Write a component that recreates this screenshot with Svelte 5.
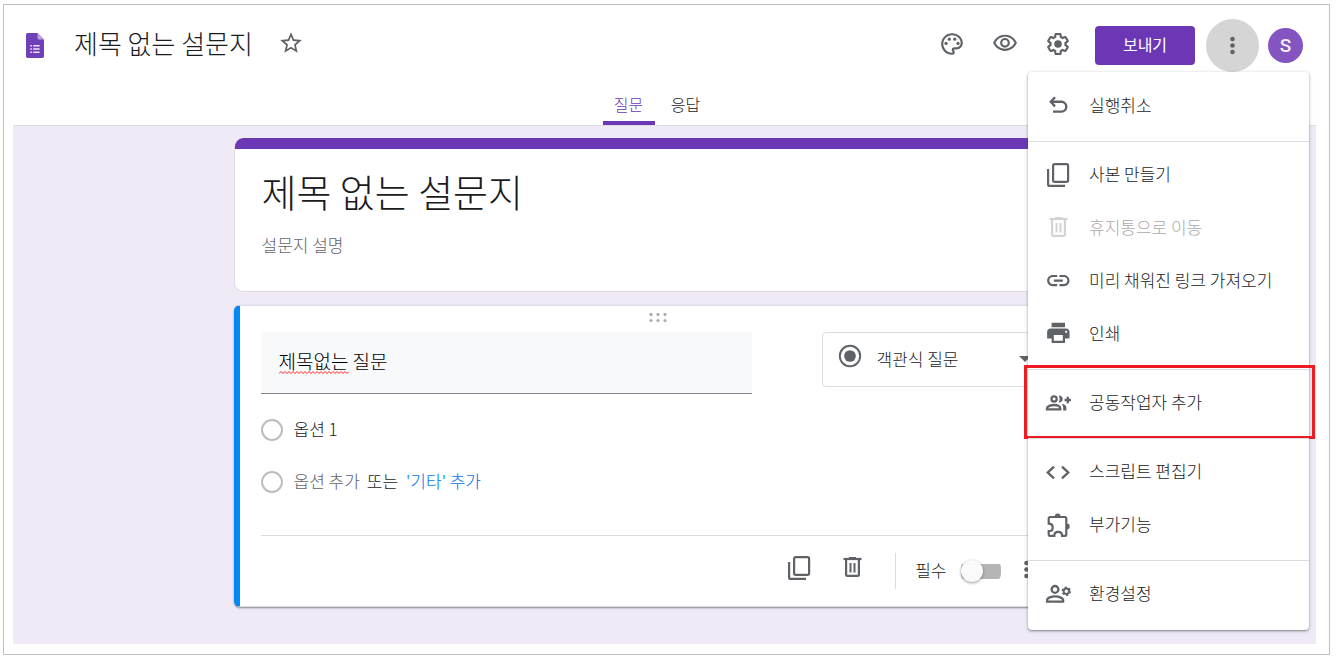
<script>
  let formTitle = $state('제목 없는 설문지');
  let description = $state('설문지 설명');
  let question = $state('제목없는 질문');
  let optionOne = $state('옵션 1');
  let required = $state(false);

  const sections = [
    { items: [{ icon: 'undo', label: '실행취소' }] },
    {
      items: [
        { icon: 'copy', label: '사본 만들기' },
        { icon: 'trash', label: '휴지통으로 이동', disabled: true },
        { icon: 'link', label: '미리 채워진 링크 가져오기' },
        { icon: 'print', label: '인쇄' }
      ]
    },
    { marked: true, items: [{ icon: 'people', label: '공동작업자 추가' }] },
    {
      items: [
        { icon: 'code', label: '스크립트 편집기' },
        { icon: 'addon', label: '부가기능' }
      ]
    },
    { items: [{ icon: 'prefs', label: '환경설정' }] }
  ];
</script>

{#snippet icon(name)}
  <svg class="icon" viewBox="0 0 26 26" aria-hidden="true">
    {#if name === 'undo'}
      <g fill="none" stroke="currentColor" stroke-width="2.4">
        <path d="M10 4.200 5.800 8.800l4.200 4.600" />
        <path d="M6 8.800h10.400a4.900 4.900 0 0 1 0 9.800H8" />
      </g>
    {:else if name === 'copy'}
      <g fill="none" stroke="currentColor" stroke-width="2.2">
        <rect x="8.1" y="2.1" width="15" height="17.8" rx="1.6" />
        <path d="M3.1 7v15.4q0 1.500 1.500 1.500H20" />
      </g>
    {:else if name === 'trash'}
      <g fill="none" stroke="currentColor" stroke-width="2.2">
        <path d="M7.100 4.500v15q0 1.400 1.400 1.400h10q1.400 0 1.400-1.400v-15" />
        <path d="M4.500 4h18" />
        <path d="M10 2.800h7" stroke-width="1.600" />
        <path d="M11.500 8v9.500M15.500 8v9.500" stroke-width="2" />
      </g>
    {:else if name === 'link'}
      <path transform="scale(1.12) translate(-.1 -.8)" d="M3.9 12c0-1.71 1.39-3.1 3.1-3.1h4V7H7c-2.76 0-5 2.24-5 5s2.24 5 5 5h4v-1.9H7c-1.71 0-3.1-1.39-3.1-3.1zM8 13h8v-2H8v2zm9-6h-4v1.9h4c1.71 0 3.1 1.39 3.1 3.1s-1.39 3.1-3.1 3.1h-4V17h4c2.76 0 5-2.24 5-5s-2.24-5-5-5z" />
    {:else if name === 'print'}
      <path transform="scale(1.12) translate(-.1 -1.400)" d="M19 8H5c-1.66 0-3 1.34-3 3v6h4v4h12v-4h4v-6c0-1.66-1.34-3-3-3zm-3 11H8v-5h8v5zm3-7c-.55 0-1-.45-1-1s.45-1 1-1 1 .45 1 1-.45 1-1 1zm-1-9H6v4h12V3z" />
    {:else if name === 'people'}
      <g fill="none" stroke="currentColor" stroke-width="2.3">
        <circle cx="9.1" cy="9" r="2.6" />
        <path d="M2 19.4v-1.2c0-2 4-3.2 7-3.2s6.300 1.200 6.300 3.200v1.200z" />
        <path d="M19.600 10h6.400M22.800 6.800v6.400" stroke-width="2.300" />
      </g>
      <path d="M13.700 5.500c2.200-.2 4 1.200 4 3.500s-1.800 3.700-4 3.500c1.300-2.200 1.300-4.800 0-7zM16.300 13.800c3 .4 5.100 1.800 5.100 4.200v2.400h-3.200V18c0-1.800-.7-3.100-1.900-4.200z" />
    {:else if name === 'code'}
      <path d="m9 7.600-6.200 5.900L9 19.400M17 7.600l6.200 5.900-6.200 5.900" fill="none" stroke="currentColor" stroke-width="2.400" />
    {:else if name === 'addon'}
      <path d="M5.100 5h14.800q1.400 0 1.400 1.400v16q0 1.400-1.400 1.400h-2.800c0-2.400-1.700-3.900-3.900-3.900s-3.900 1.500-3.900 3.900H5.100q-1.400 0-1.400-1.400v-3.200c2.500 0 4-1.700 4-3.800s-1.500-3.800-4-3.800V6.400Q3.700 5 5.100 5z" fill="none" stroke="currentColor" stroke-width="2.200" />
      <path d="M9.800 4.500a2.900 2.900 0 0 1 5.800 0zM21.800 11.500a2.900 2.900 0 0 1 0 5.800z" />
    {:else if name === 'prefs'}
      <g fill="none" stroke="currentColor" stroke-width="2.300">
        <circle cx="10" cy="8.400" r="3.400" />
        <path d="M2.100 20.600v-1.500c0-2.400 4.600-3.700 8-3.700s8 1.300 8 3.700v1.500z" />
        <circle cx="21.300" cy="10.300" r="2.700" stroke-width="2" />
        <circle cx="21.300" cy="10.300" r="4" stroke-width="1.400" stroke-dasharray="2.100 2.090" />
      </g>
    {/if}
  </svg>
{/snippet}

{#snippet dots()}
  <svg class="icon" viewBox="0 0 26 26" aria-hidden="true">
    <circle cx="12.500" cy="6" r="2.300" /><circle cx="12.500" cy="12.500" r="2.300" /><circle cx="12.500" cy="19" r="2.300" />
  </svg>
{/snippet}

<div class="frame">
  <header>
    <div class="topbar">
      <svg class="logo" viewBox="0 0 18 25" aria-hidden="true">
        <path d="M1.700 0H11.500L18 6.600V23.300Q18 25 16.300 25H1.700Q0 25 0 23.300V1.700Q0 0 1.700 0z" fill="#7040b8" />
        <path d="M11.500 0 18 6.600h-4.800q-1.700 0-1.700-1.700z" fill="#b9a0dc" />
        <path d="M4.300 12h1.600v1.600H4.300zm0 3.200h1.600v1.600H4.300zm0 3.200h1.600V20H4.300zM7.200 12h6.400v1.600H7.200zm0 3.200h6.400v1.600H7.200zm0 3.200h6.400V20H7.200z" fill="#eee6f8" />
      </svg>
      <input class="name" aria-label="문서 이름" bind:value={formTitle} />
      <button class="star" aria-label="별표">
        <svg class="icon" viewBox="0 0 24 24"><path d="m22 9.240-7.190-.62L12 2 9.190 8.630 2 9.240l5.460 4.730L5.820 21 12 17.270 18.180 21l-1.630-7.030L22 9.240zM12 15.400l-3.760 2.270 1-4.280-3.320-2.880 4.380-.38L12 6.100l1.710 4.040 4.380.38-3.320 2.880 1 4.280L12 15.400z" /></svg>
      </button>
      <div class="actions">
        <button class="tool" aria-label="테마">
          <svg class="icon" viewBox="0 0 24 24"><path d="M12 22C6.490 22 2 17.510 2 12S6.490 2 12 2s10 4.040 10 9c0 3.310-2.690 6-6 6h-1.770c-.28 0-.5.220-.5.500 0 .120.050.230.130.330.410.470.640 1.060.640 1.670A2.500 2.500 0 0 1 12 22zm0-18c-4.410 0-8 3.590-8 8s3.590 8 8 8c.28 0 .5-.22.5-.5a.54.54 0 0 0-.14-.35c-.41-.46-.63-1.050-.63-1.650a2.500 2.500 0 0 1 2.500-2.500H16c2.210 0 4-1.790 4-4 0-3.860-3.590-7-8-7z" /><circle cx="6.500" cy="11.500" r="1.500" /><circle cx="9.500" cy="7.500" r="1.500" /><circle cx="14.500" cy="7.500" r="1.500" /><circle cx="17.500" cy="11.500" r="1.500" /></svg>
        </button>
        <button class="tool" aria-label="미리보기">
          <svg class="icon" viewBox="0 0 24 24"><path transform="translate(0 -.6)" d="M12 6c3.790 0 7.170 2.130 8.820 5.500C19.170 14.870 15.790 17 12 17s-7.170-2.130-8.820-5.500C4.830 8.130 8.210 6 12 6m0-2C7 4 2.730 7.110 1 11.500 2.730 15.890 7 19 12 19s9.270-3.110 11-7.500C21.270 7.110 17 4 12 4zm0 5a2.500 2.500 0 0 1 0 5 2.500 2.500 0 0 1 0-5m0-2c-2.480 0-4.500 2.020-4.500 4.500S9.520 16 12 16s4.500-2.020 4.500-4.500S14.480 7 12 7z" /></svg>
        </button>
        <button class="tool" aria-label="설정">
          <svg class="icon" viewBox="0 0 24 24"><path d="M13.850 22.250h-3.700c-.74 0-1.360-.54-1.450-1.270l-.27-1.890c-.27-.14-.53-.29-.79-.46l-1.800.72c-.7.26-1.470-.03-1.810-.65L2.200 15.530c-.35-.66-.2-1.440.36-1.880l1.530-1.190c-.01-.15-.02-.3-.02-.46 0-.15.01-.31.02-.46l-1.520-1.190c-.59-.45-.74-1.260-.37-1.880l1.850-3.190c.34-.62 1.110-.9 1.790-.63l1.810.73c.26-.17.52-.32.78-.46l.27-1.910c.09-.7.710-1.250 1.440-1.250h3.700c.74 0 1.360.54 1.450 1.270l.27 1.890c.27.14.53.29.79.46l1.800-.72c.71-.26 1.480.03 1.820.65l1.840 3.180c.36.66.2 1.440-.36 1.880l-1.520 1.190c.01.15.02.3.02.46s-.01.31-.02.46l1.520 1.190c.56.45.72 1.230.37 1.860l-1.860 3.220c-.34.62-1.110.9-1.800.63l-1.800-.72c-.26.17-.52.32-.78.46l-.27 1.910c-.1.680-.72 1.220-1.460 1.220zm-3.230-2h2.760l.37-2.550.53-.22c.44-.18.88-.44 1.340-.78l.45-.34 2.380.96 1.380-2.400-2.030-1.580.07-.56c.03-.26.06-.51.06-.78s-.03-.53-.06-.78l-.07-.56 2.030-1.580-1.390-2.400-2.390.96-.45-.35c-.42-.32-.87-.58-1.330-.77l-.52-.22-.37-2.550h-2.760l-.37 2.550-.53.21c-.44.19-.88.44-1.340.79l-.45.33-2.380-.95-1.390 2.390 2.030 1.580-.07.56a7 7 0 0 0-.06.79c0 .26.02.53.06.78l.07.56-2.030 1.580 1.380 2.400 2.390-.96.45.35c.43.33.86.58 1.330.77l.53.22.38 2.550z" /><circle cx="12" cy="12" r="3.500" /></svg>
        </button>
        <button class="send">보내기</button>
        <div class="more">
          <button class="tool pressed" aria-label="더보기" aria-expanded="true">{@render dots()}</button>
          <div class="menu" role="menu">
            {#each sections as section}
              <div class="section">
                {#each section.items as item}
                  <button role="menuitem" class="item" disabled={item.disabled}>
                    {@render icon(item.icon)}
                    <span>{item.label}</span>
                  </button>
                {/each}
                {#if section.marked}<div class="mark"></div>{/if}
              </div>
            {/each}
          </div>
        </div>
        <button class="avatar" aria-label="계정">S</button>
      </div>
    </div>
    <nav class="tabs">
      <button class="tab active">질문</button>
      <button class="tab">응답</button>
    </nav>
  </header>

  <main>
    <section class="card intro">
      <input class="title" aria-label="설문지 제목" bind:value={formTitle} />
      <input class="desc" aria-label="설문지 설명" bind:value={description} />
    </section>

    <section class="card question">
      <svg class="grip" viewBox="0 0 18 10" aria-hidden="true">
        {#each [1.500, 7.500] as y}
          {#each [2, 9, 16] as x}<circle cx={x} cy={y} r="1.600" />{/each}
        {/each}
      </svg>
      <div class="ask">
        <div class="prompt">
          <input aria-label="질문" bind:value={question} />
          <svg class="squiggle" viewBox="0 0 70 3" aria-hidden="true">
            <path d={'M0 2.500' + 'l2-2 2 2'.repeat(17) + 'l2-2'} />
          </svg>
        </div>
        <div class="kind">
          <svg class="icon" viewBox="0 0 24 24" aria-hidden="true"><circle cx="12" cy="12" r="9.400" fill="none" stroke="currentColor" stroke-width="1.800" /><circle cx="12" cy="12" r="5.400" /></svg>
          <select aria-label="질문 유형"><option>객관식 질문</option></select>
          <svg class="caret" viewBox="0 0 12 6" aria-hidden="true"><path d="M0 0h12L6 6z" /></svg>
        </div>
      </div>
      <div class="option">
        <span class="ring"></span>
        <input aria-label="옵션" bind:value={optionOne} />
      </div>
      <div class="option">
        <span class="ring"></span>
        <button class="text add">옵션 추가</button>
        <span class="text">또는</span>
        <button class="text other">'기타' 추가</button>
      </div>
      <footer>
        <button class="tool" aria-label="복사">{@render icon('copy')}</button>
        <button class="tool" aria-label="삭제">{@render icon('trash')}</button>
        <span class="rule"></span>
        <label><span class="text">필수</span> <input type="checkbox" bind:checked={required} /></label>
        <button class="tool" aria-label="옵션 더보기">{@render dots()}</button>
      </footer>
    </section>
  </main>
</div>

<style>
  :global(body) {
    margin: 0;
    background: #fff;
    overflow-x: hidden;
  }
  .frame {
    box-sizing: border-box;
    margin: 4px 6px 4px 3px;
    padding: 14px 13px 10px 9px;
    border: 1px solid #c0c0c0;
    color: #1a1b1e;
    font: 300 17px/26px 'Noto Sans CJK KR', sans-serif;
  }
  button,
  input,
  select {
    margin: 0;
    padding: 0;
    border: 0;
    background: none;
    color: inherit;
    font: inherit;
  }
  input,
  select {
    min-width: 0;
    outline: 0;
  }
  .icon {
    display: block;
    flex: none;
    width: 26px;
    height: 26px;
    fill: currentColor;
    color: #5f6368;
  }
  .text,
  .item span {
    padding-bottom: 2px;
  }

  .topbar {
    display: flex;
    align-items: center;
    height: 53px;
    padding: 0 13px;
  }
  .logo {
    flex: none;
    width: 18px;
    height: 25px;
  }
  .name {
    width: 181px;
    margin: 0 23px 0 30px;
    padding-bottom: 5px;
    font-size: 26px;
    line-height: 38px;
  }
  .star .icon {
    margin-bottom: 5px;
  }
  .actions {
    display: flex;
    align-items: center;
    margin-left: auto;
  }
  .tool {
    display: flex;
    align-items: center;
    justify-content: center;
    width: 53px;
    height: 53px;
    border-radius: 50%;
  }
  .actions > .tool {
    padding-bottom: 4px;
  }
  .send {
    width: 100px;
    height: 39px;
    margin: 0 11px;
    padding-bottom: 3px;
    border-radius: 4px;
    background: #6c37b5;
    color: #fff;
    font-weight: 400;
    font-size: 16px;
  }
  .more {
    position: relative;
    margin-right: 9px;
  }
  .pressed {
    background: #d5d5d5;
  }
  .avatar {
    width: 35px;
    height: 35px;
    border-radius: 50%;
    background: #8455c0;
    color: #f4eefb;
    font: 500 19px/35px Roboto, sans-serif;
  }

  .tabs {
    display: flex;
    justify-content: center;
    gap: 5px;
    height: 53px;
    padding-right: 15px;
    border-bottom: 1px solid #dadce0;
  }
  .tab {
    box-sizing: border-box;
    width: 52px;
    padding-top: 15px;
    border-bottom: 4px solid transparent;
    font-size: 16px;
  }
  .active {
    color: #6c37b5;
    background: linear-gradient(#6c37b5, #6c37b5) bottom / 100% 4px no-repeat;
    background-origin: border-box;
    border-radius: 3px 3px 0 0;
  }

  .menu {
    position: absolute;
    z-index: 2;
    top: 53px;
    right: -50px;
    width: 281px;
    padding: 1px 0;
    border-radius: 4px;
    background: #fff;
    box-shadow: 0 1px 2px rgba(60, 64, 67, 0.5), 0 1px 4px rgba(60, 64, 67, 0.2);
  }
  .section {
    position: relative;
    display: grid;
    gap: 1px;
    padding: 7px 0 9px;
  }
  .section + .section {
    border-top: 1px solid #dadce0;
  }
  .item {
    display: flex;
    align-items: center;
    gap: 18px;
    height: 52px;
    padding: 0 17px;
    text-align: left;
    white-space: nowrap;
  }
  .item:disabled {
    color: #aaa;
  }
  .item:disabled .icon {
    color: #d2d3d4;
  }
  .mark {
    position: absolute;
    inset: -5px -6px -1px -4px;
    border: 3px solid #ed1c24;
    pointer-events: none;
  }

  main {
    padding: 12px 15px 37px 0;
    background: #f0eaf6;
  }
  .card {
    box-sizing: border-box;
    max-width: 847px;
    margin: 0 auto;
    border: 1px solid #dadce0;
    border-radius: 9px;
    background: #fff;
  }
  .intro {
    display: flex;
    flex-direction: column;
    gap: 14px;
    padding: 28px 27px 32px;
    border-top: 0;
    background: linear-gradient(#6c37b5, #6c37b5) top / 100% 11px no-repeat #fff;
    background-origin: border-box;
  }
  .title {
    height: 50px;
    font-size: 38px;
    line-height: 50px;
  }
  .desc {
    height: 29px;
    color: #5f6368;
  }

  .question {
    position: relative;
    margin-top: 13px;
    padding: 26px 26px 0 21px;
    border-left: 6px solid #0389f7;
    border-radius: 6px;
    box-shadow: 0 1px 2px rgba(60, 64, 67, 0.6);
  }
  .grip {
    position: absolute;
    top: 7px;
    left: 50%;
    width: 18px;
    height: 10px;
    margin-left: -11px;
    fill: #a9abae;
  }
  .ask {
    display: flex;
    align-items: flex-start;
    gap: 70px;
    margin-bottom: 10px;
  }
  .prompt {
    position: relative;
    flex: 1;
    height: 61px;
    border-bottom: 1px solid #80868b;
    border-radius: 4px 4px 0 0;
    background: #f8f9fa;
  }
  .prompt input {
    box-sizing: border-box;
    width: 100%;
    height: 56px;
    padding: 0 18px;
    color: #000;
    font-size: 19px;
  }
  .squiggle {
    position: absolute;
    top: 39px;
    left: 18px;
    width: 70px;
    height: 3px;
    fill: none;
    stroke: #f22;
  }
  .kind {
    box-sizing: border-box;
    display: flex;
    align-items: center;
    width: 232px;
    height: 55px;
    padding: 0 22px 2px 14px;
    border: 1px solid #dadce0;
    border-radius: 4px;
  }
  .kind .icon {
    margin-bottom: 5px;
  }
  .kind select {
    flex: 1;
    margin-left: 14px;
    appearance: none;
  }
  .caret {
    width: 12px;
    height: 6px;
    fill: #5f6368;
  }
  .option {
    display: flex;
    align-items: center;
    gap: 11px;
    height: 52px;
  }
  .option input {
    padding-bottom: 2px;
  }
  .option > .add {
    margin-right: -4px;
  }
  .option > .other {
    margin-left: -3px;
  }
  .ring {
    box-sizing: border-box;
    width: 22px;
    height: 22px;
    border: 2px solid #bdbdbd;
    border-radius: 50%;
  }
  .add {
    color: #5f6368;
  }
  .other {
    color: #0074ea;
  }

  footer {
    display: flex;
    align-items: center;
    justify-content: flex-end;
    height: 70px;
    margin-top: 27px;
    border-top: 1px solid #dadce0;
  }
  footer .tool {
    padding-bottom: 6px;
  }
  footer .tool:last-child {
    padding-bottom: 2px;
  }
  .rule {
    width: 1px;
    height: 36px;
    margin: 0 19px 0 17px;
    background: #dadce0;
  }
  label {
    display: flex;
    align-items: center;
    gap: 14px;
  }
  label input {
    position: relative;
    width: 40px;
    height: 22px;
    appearance: none;
    background: linear-gradient(#b5b5b5, #b5b5b5) center / 100% 15px no-repeat;
    border-radius: 8px;
  }
  label input::before {
    content: '';
    display: block;
    width: 22px;
    height: 22px;
    border-radius: 50%;
    background: #fafafa;
    box-shadow: 0 1px 3px rgba(0, 0, 0, 0.4);
  }
  label input:checked::before {
    margin-left: auto;
  }
</style>
